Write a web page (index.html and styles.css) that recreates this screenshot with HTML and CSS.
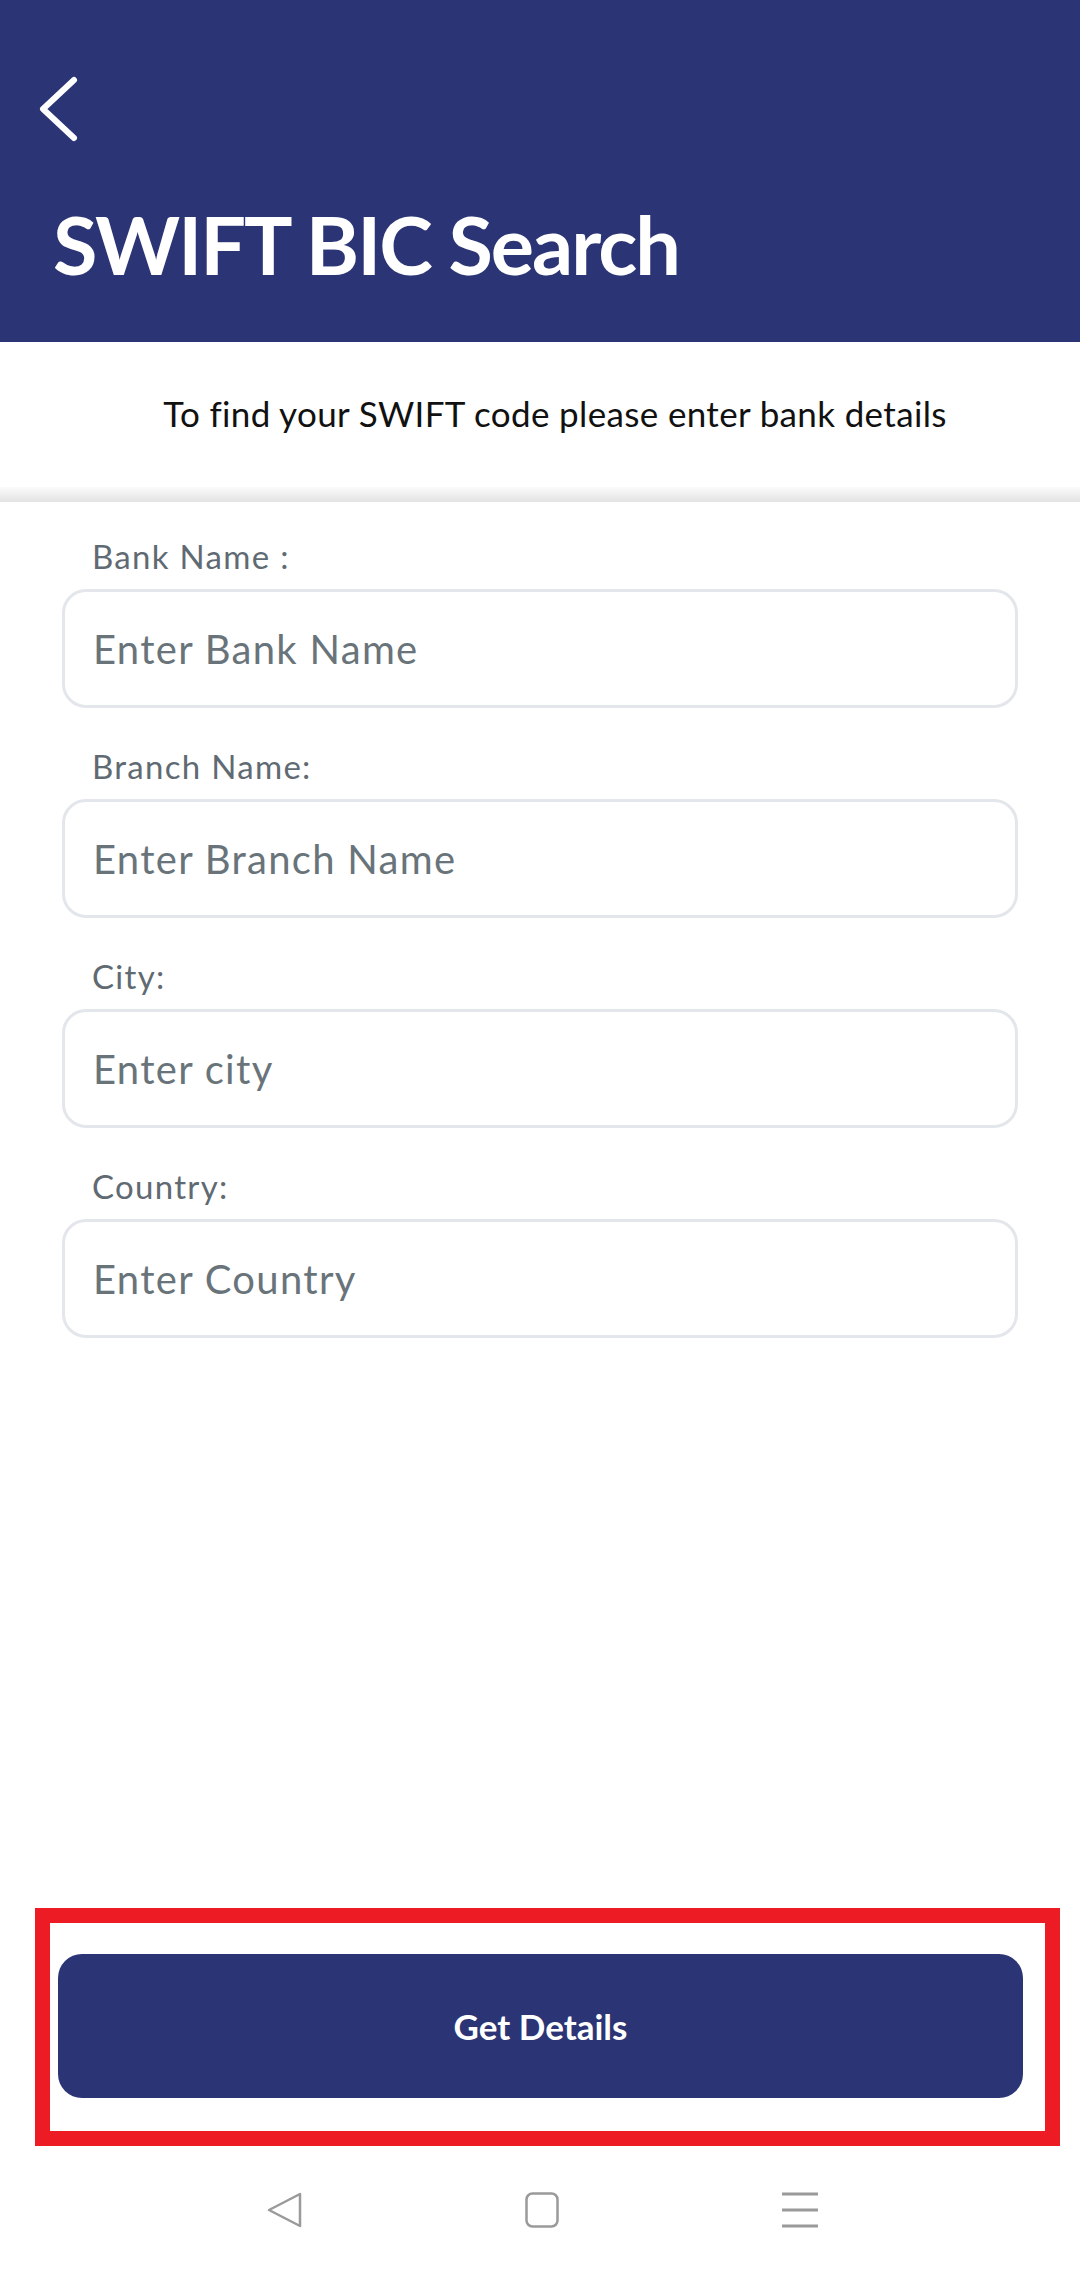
FILE: index.html
```html
<!DOCTYPE html>
<html lang="en">
<head>
  <meta charset="UTF-8">
  <title>SWIFT BIC Search</title>
  <meta name="viewport" content="width=device-width, initial-scale=1.0">
  <link rel="stylesheet" href="styles.css">
</head>
<body>
  <div class="screen">
    <header class="top-bar">
      <button class="back-btn" type="button" aria-label="Back">
        <svg width="48" height="72" viewBox="0 0 48 72">
          <path d="M38 6 L7 35 L38 64" fill="none" stroke="#fff" stroke-width="6" stroke-linecap="round" stroke-linejoin="round"/>
        </svg>
      </button>
      <h1 class="page-title">SWIFT BIC Search</h1>
    </header>

    <div class="intro">To find your SWIFT code please enter bank details</div>
    <div class="intro-shadow"></div>

    <form class="search-form" onsubmit="return false;">
      <div class="field">
        <label class="field-label" for="bank">Bank Name :</label>
        <input class="field-input" id="bank" type="text" placeholder="Enter Bank Name">
      </div>
      <div class="field">
        <label class="field-label" for="branch">Branch Name:</label>
        <input class="field-input" id="branch" type="text" placeholder="Enter Branch Name">
      </div>
      <div class="field">
        <label class="field-label" for="city">City:</label>
        <input class="field-input" id="city" type="text" placeholder="Enter city">
      </div>
      <div class="field">
        <label class="field-label" for="country">Country:</label>
        <input class="field-input" id="country" type="text" placeholder="Enter Country">
      </div>
    </form>

    <div class="spacer"></div>

    <div class="action-frame">
      <button class="details-btn" type="button">Get Details</button>
    </div>

    <nav class="nav-bar">
      <span class="nav-item">
        <svg width="36" height="36" viewBox="0 0 36 36">
          <path d="M34 2 L34 34 L3 18 Z" fill="none" stroke="#9a9a9a" stroke-width="2.5" stroke-linejoin="round"/>
        </svg>
      </span>
      <span class="nav-item">
        <svg width="36" height="36" viewBox="0 0 36 36">
          <rect x="2.5" y="1.5" width="31" height="33" rx="6" fill="none" stroke="#9a9a9a" stroke-width="2.5"/>
        </svg>
      </span>
      <span class="nav-item">
        <svg width="36" height="36" viewBox="0 0 36 36">
          <path d="M0 2 H36 M0 18 H36 M0 34 H36" stroke="#9a9a9a" stroke-width="3"/>
        </svg>
      </span>
    </nav>
  </div>
</body>
</html>
```

FILE: styles.css
```css
body {
  margin: 0;
  background: #fff;
  font-family: Lato, 'Noto Sans', Arial, sans-serif;
}

.screen {
  height: 100vh;
  display: flex;
  flex-direction: column;
}

/* header */
.top-bar {
  background: #2b3475;
  height: 342px;
  box-sizing: border-box;
  padding: 74px 0 0 36px;
}

.back-btn {
  display: block;
  background: none;
  border: none;
  padding: 0;
  width: 48px;
  height: 72px;
  cursor: pointer;
}

.back-btn svg {
  display: block;
}

.page-title {
  margin: 48px 0 0 17px;
  font-size: 81px;
  line-height: 100px;
  font-weight: 700;
  letter-spacing: -2px;
  color: #fff;
}

/* intro text */
.intro {
  height: 145px;
  box-sizing: border-box;
  padding: 50px 0 0 30px;
  text-align: center;
  font-size: 35px;
  line-height: 42px;
  letter-spacing: 0.35px;
  color: #111;
}

.intro-shadow {
  height: 15px;
  background: linear-gradient(to bottom, #fbfbfb, #e3e3e3);
}

/* form */
.search-form {
  padding: 34px 62px 0;
}

.field {
  margin-bottom: 38px;
}

.field-label {
  display: block;
  padding-left: 30px;
  margin-bottom: 13px;
  font-size: 33px;
  line-height: 40px;
  letter-spacing: 1.3px;
  color: #5f6a72;
}

.field-input {
  display: block;
  width: 100%;
  height: 119px;
  box-sizing: border-box;
  border: 3px solid #e3e6ea;
  border-radius: 24px;
  padding: 0 28px;
  font-family: Lato, 'Noto Sans', Arial, sans-serif;
  font-size: 40px;
  letter-spacing: 1.3px;
  color: #333;
  background: #fff;
  outline: none;
}

.field-input::placeholder {
  color: #69747a;
}

.spacer {
  flex: 1;
}

/* bottom action */
.action-frame {
  margin: 0 20px 0 35px;
  border: 15px solid #ed1c24;
  padding: 31px 22px 33px 8px;
}

.details-btn {
  display: block;
  width: 100%;
  height: 144px;
  border: none;
  border-radius: 24px;
  background: #2b3475;
  color: #fff;
  font-family: Lato, 'Noto Sans', Arial, sans-serif;
  font-size: 35px;
  font-weight: 700;
  cursor: pointer;
}

/* system nav */
.nav-bar {
  height: 128px;
  display: flex;
  justify-content: center;
  align-items: center;
  gap: 222px;
  padding-left: 4px;
}

.nav-item svg {
  display: block;
}
```
